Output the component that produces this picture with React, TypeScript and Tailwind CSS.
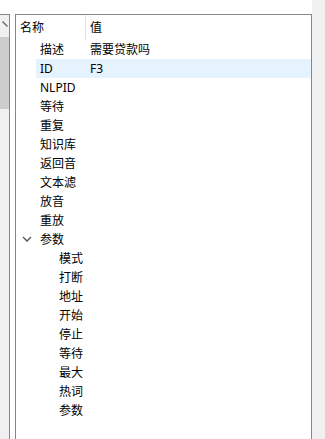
import React from "react";

type Row = { name: string; value?: string; level: 1 | 2; selected?: boolean; expander?: boolean };

const rows: Row[] = [
  { name: "描述", value: "需要贷款吗", level: 1 },
  { name: "ID", value: "F3", level: 1, selected: true },
  { name: "NLPID", level: 1 },
  { name: "等待", level: 1 },
  { name: "重复", level: 1 },
  { name: "知识库", level: 1 },
  { name: "返回音", level: 1 },
  { name: "文本滤", level: 1 },
  { name: "放音", level: 1 },
  { name: "重放", level: 1 },
  { name: "参数", level: 1, expander: true },
  { name: "模式", level: 2 },
  { name: "打断", level: 2 },
  { name: "地址", level: 2 },
  { name: "开始", level: 2 },
  { name: "停止", level: 2 },
  { name: "等待", level: 2 },
  { name: "最大", level: 2 },
  { name: "热词", level: 2 },
  { name: "参数", level: 2 },
];

export default function App() {
  return (
    <div
      className="flex w-[325px] h-[439px] overflow-hidden bg-white text-[12px] text-black"
      style={{ fontFamily: '"Noto Sans", "Noto Sans CJK SC", sans-serif' }}
    >
      <div className="flex flex-col w-[312px] h-full">
        <div className="h-[14px] shrink-0 bg-white" />
        <div className="flex flex-1 min-h-0">
          {/* left neighbour panel with scrollbar */}
          <div className="w-[10px] shrink-0 border-t border-r border-[#828790] bg-[#f0f0f0] flex flex-col">
            <div className="h-[22px] relative shrink-0">
              <svg width="9" height="22" className="absolute left-0 top-0">
                <path d="M2.5 6.5 L7.5 11.5" stroke="#606060" strokeWidth="1.2" fill="none" />
              </svg>
            </div>
            <div className="h-[72px] w-[9px] bg-[#cdcdcd] shrink-0" />
          </div>
          <div className="w-[5px] shrink-0 bg-white" />
          {/* main property grid */}
          <div className="flex-1 border-t border-l border-r border-[#828790] bg-white flex flex-col">
            <div className="flex h-[25px] shrink-0 items-center">
              <div className="w-[70px] h-full flex items-center pl-[4px] border-r border-[#e5e5e5]">名称</div>
              <div className="pl-[4px]">值</div>
            </div>
            {rows.map((r, i) => (
              <div key={i} className="flex h-[19px] shrink-0">
                <div className="w-[20px] shrink-0 flex items-center justify-center">
                  {r.expander && (
                    <svg width="10" height="7" viewBox="0 0 10 7" className="ml-[2px]">
                      <path d="M1 1 L5 5 L9 1" stroke="#505050" strokeWidth="1.3" fill="none" />
                    </svg>
                  )}
                </div>
                <div className={`flex flex-1 items-center ${r.selected ? "bg-[#e5f3ff]" : ""}`}>
                  <div className={`w-[50px] shrink-0 whitespace-nowrap ${r.level === 2 ? "pl-[23px]" : "pl-[4px]"}`}>
                    {r.name}
                  </div>
                  <div className="pl-[4px] whitespace-nowrap">{r.value ?? ""}</div>
                </div>
              </div>
            ))}
          </div>
        </div>
      </div>
      <div className="flex-1 bg-[#f0f0f0]" />
    </div>
  );
}
